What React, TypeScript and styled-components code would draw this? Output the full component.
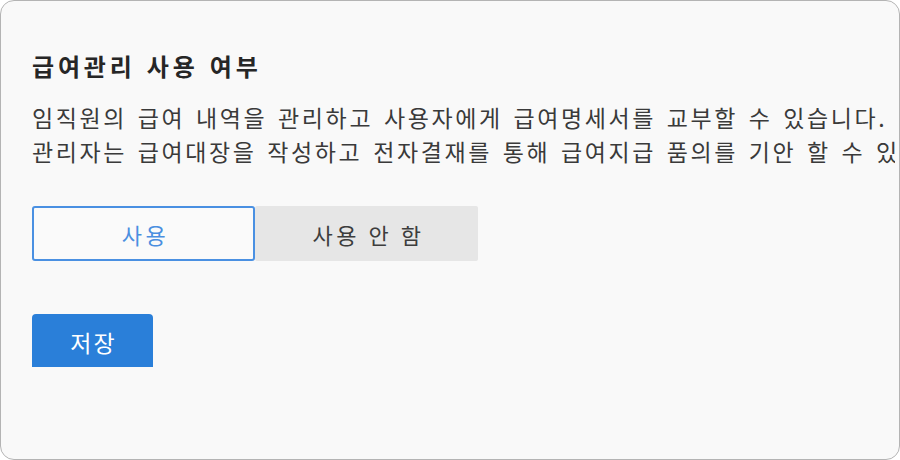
import React, { useState } from "react";
import styled, { createGlobalStyle } from "styled-components";

const GlobalStyle = createGlobalStyle`
  html, body {
    margin: 0;
    padding: 0;
    background: #ffffff;
  }
  body {
    font-family: "Noto Sans CJK KR", "Noto Sans", sans-serif;
  }
`;

const Frame = styled.div`
  box-sizing: border-box;
  width: 900px;
  height: 460px;
  border: 1px solid #b4b4b4;
  border-radius: 14px;
  background: #f9f9f9;
  overflow: hidden;
`;

const Content = styled.div`
  box-sizing: border-box;
  height: 366px;
  margin-right: 4px;
  padding: 49px 0 0 31px;
  overflow: hidden;
`;

const Title = styled.h2`
  margin: 0 0 18px 0;
  font-size: 24px;
  line-height: 32px;
  font-weight: bold;
  letter-spacing: 3.8px;
  word-spacing: 2px;
  color: #262626;
  white-space: nowrap;
`;

const Description = styled.div`
  font-size: 23px;
  line-height: 34px;
  letter-spacing: 2.6px;
  word-spacing: 3px;
  color: #3a3a3a;
  white-space: nowrap;
`;

const Toggle = styled.div`
  display: flex;
  width: 446px;
  height: 55px;
  margin-top: 38px;
`;

const Option = styled.button<{ $active: boolean }>`
  flex: 1;
  box-sizing: border-box;
  border: 2px solid ${({ $active }) => ($active ? "#4a90e2" : "transparent")};
  border-radius: ${({ $active }) => ($active ? "3px" : "2px")};
  background: ${({ $active }) => ($active ? "#fafafa" : "#e6e6e6")};
  color: ${({ $active }) => ($active ? "#4a8fe0" : "#3d3d3d")};
  font-family: inherit;
  font-size: 22px;
  letter-spacing: 3.5px;
  padding: 0 0 0 4px;
  cursor: pointer;
`;

const SaveButton = styled.button`
  display: block;
  margin-top: 53px;
  width: 121px;
  height: 56px;
  border: none;
  border-radius: 4px;
  background: #2a7fd9;
  color: #ffffff;
  font-family: inherit;
  font-size: 23px;
  letter-spacing: 2px;
  padding: 0 0 0 2px;
  cursor: pointer;
`;

export default function App() {
  const [enabled, setEnabled] = useState(true);
  return (
    <>
      <GlobalStyle />
      <Frame>
        <Content>
          <Title>급여관리 사용 여부</Title>
          <Description>
            임직원의 급여 내역을 관리하고 사용자에게 급여명세서를 교부할 수 있습니다.
          </Description>
          <Description>
            관리자는 급여대장을 작성하고 전자결재를 통해 급여지급 품의를 기안 할 수 있습니다.
          </Description>
          <Toggle>
            <Option $active={enabled} onClick={() => setEnabled(true)}>
              사용
            </Option>
            <Option $active={!enabled} onClick={() => setEnabled(false)}>
              사용 안 함
            </Option>
          </Toggle>
          <SaveButton>저장</SaveButton>
        </Content>
      </Frame>
    </>
  );
}
